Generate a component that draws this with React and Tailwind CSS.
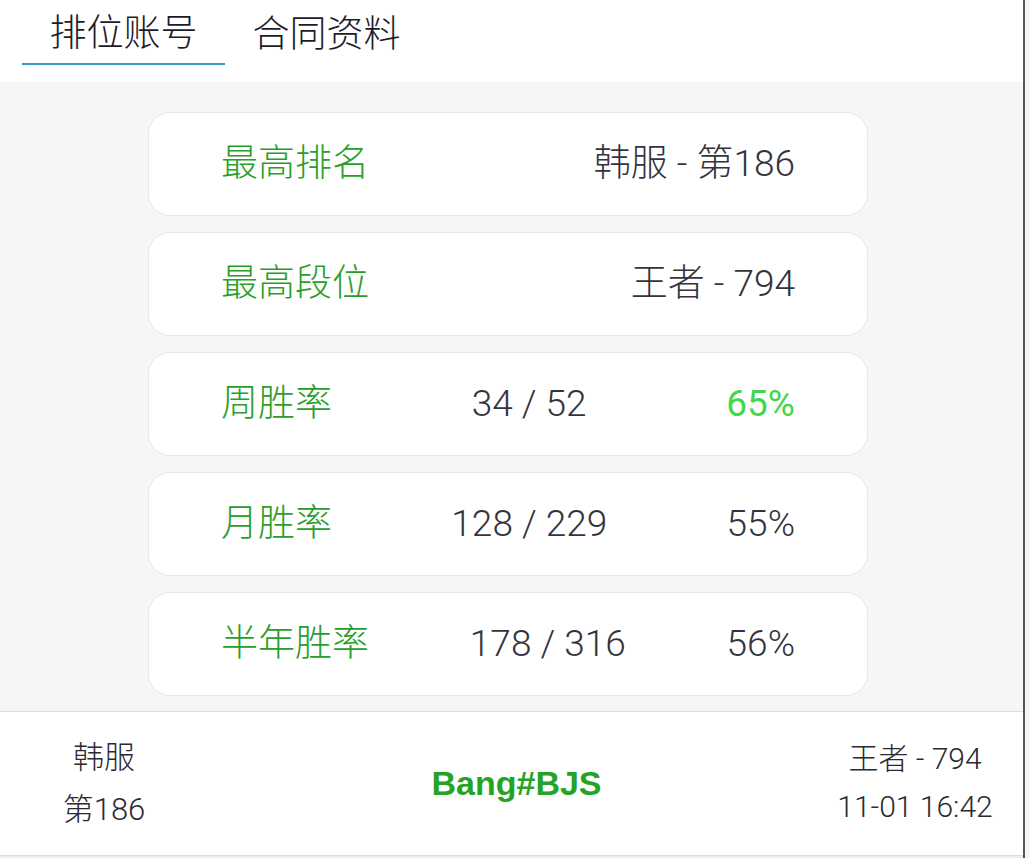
import React from 'react';

const font = { fontFamily: 'Roboto, "Noto Sans CJK SC", sans-serif' };

const rows = [
  { label: '最高排名', value: '韩服 - 第186' },
  { label: '最高段位', value: '王者 - 794' },
  { label: '周胜率', mid: '34 / 52', value: '65%', hot: true },
  { label: '月胜率', mid: '128 / 229', value: '55%' },
  { label: '半年胜率', mid: '178 / 316', value: '56%' },
];

function StatCard({ row }) {
  return (
    <div className="flex h-[104px] w-[720px] items-center justify-between rounded-[22px] border border-[#e6e7ea] bg-white px-[72px] text-[37px] font-light">
      <span className="text-[#2a9e2a]">{row.label}</span>
      {row.mid && <span className="text-[#34343e]">{row.mid}</span>}
      <span className={row.hot ? 'font-normal text-[#3fd84a]' : 'text-[#34343e]'}>{row.value}</span>
    </div>
  );
}

export default function App() {
  return (
    <div className="flex h-[858px] w-[1030px] bg-white" style={font}>
      <div className="flex w-[1025px] flex-col border-r-2 border-[#55555c]">
        {/* tabs */}
        <div className="flex h-[82px] bg-white pl-[22px]">
          <div className="flex h-[65px] w-[203px] items-center justify-center border-b-2 border-[#3a98d0] pt-[4px] text-[37px] font-light text-[#1c1c28]">
            排位账号
          </div>
          <div className="flex h-[65px] w-[203px] items-center justify-center pt-[4px] text-[37px] font-light text-[#1c1c28]">
            合同资料
          </div>
        </div>

        {/* stats */}
        <div className="flex flex-1 flex-col gap-[16px] bg-[#f5f6f8] pl-[148px] pt-[30px] pb-[15px]">
          {rows.map(r => (
            <StatCard key={r.label} row={r} />
          ))}
        </div>

        {/* footer */}
        <div className="flex h-[146px] items-center justify-between border-y border-[#dcdde0] bg-white pl-[58px] pr-[28px] font-light text-[#2a2a32]">
          <div className="flex w-[92px] flex-col items-center pt-[2px] text-[31px] leading-[52px]">
            <span>韩服</span>
            <span>第186</span>
          </div>
          <div
            className="ml-[48px] text-[34px] font-bold text-[#25a325]"
            style={{ fontFamily: '"Liberation Sans", Arial, sans-serif' }}
          >
            Bang#BJS
          </div>
          <div className="flex w-[160px] flex-col items-center text-[30px] leading-[48px]">
            <span>王者 - 794</span>
            <span>11-01 16:42</span>
          </div>
        </div>
        <div className="h-[2px] bg-[#eceef0]" />
      </div>
      <div className="flex-1 bg-[#f4f4f6]" />
    </div>
  );
}
